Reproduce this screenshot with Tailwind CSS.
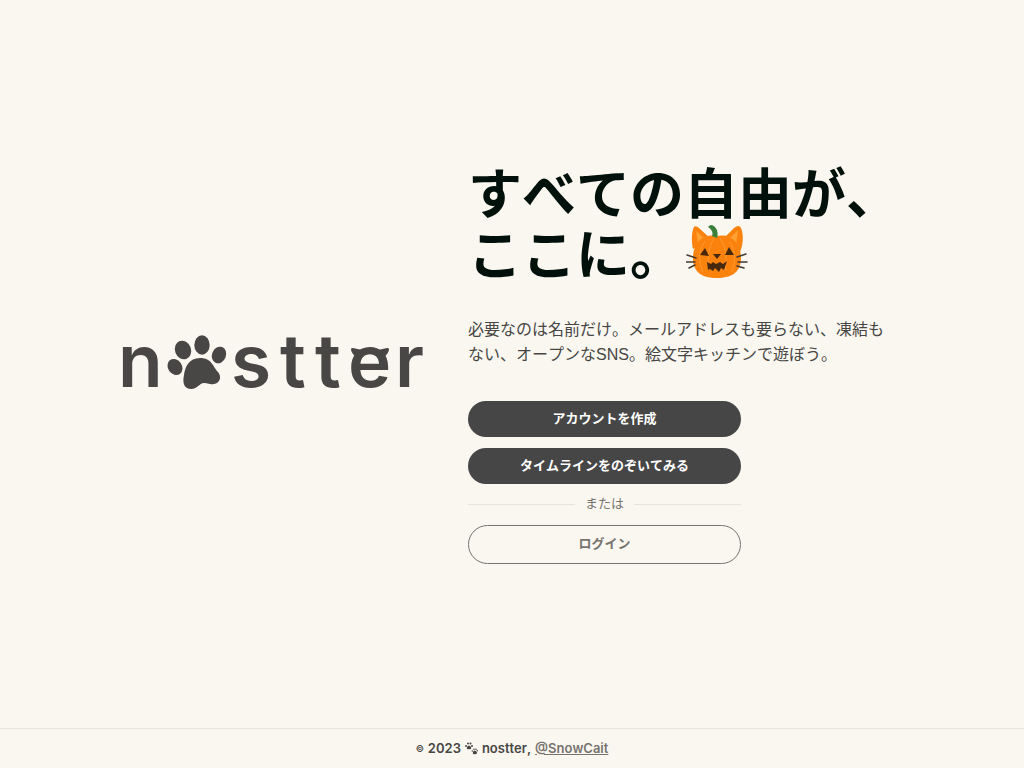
<!DOCTYPE html>
<html lang="ja">
<head>
<meta charset="utf-8">
<meta name="viewport" content="width=device-width, initial-scale=1">
<title>nostter</title>
<script src="https://cdn.jsdelivr.net/npm/@tailwindcss/browser@4"></script>
</head>
<body class="flex min-h-screen flex-col bg-[#faf7f1] font-['Liberation_Sans','Noto_Sans_CJK_JP',sans-serif] text-[#474644] [font-kerning:none]">
<main class="flex flex-1 flex-wrap items-center justify-center gap-[42px] pb-1">
  <svg class="w-[309px]" viewBox="-5 -22 309 100" fill="#484745" role="img" aria-label="nostter">
    <g font-family="Inter, sans-serif" font-size="73" font-weight="600">
      <text y="53" x="-4">n</text>
      <text y="53" x="109">s</text>
      <text y="53" x="158">t</text>
      <text y="53" x="193">t</text>
      <text y="53" x="226">e</text>
      <text y="53" x="273">r</text>
    </g>
    <path d="M229 15q0-1 2-1l9 2-6 7q-5-4-5-8ZM267 15q0-1-2-1l-9 2 6 7q5-4 5-8Z"/>
    <ellipse cx="53" cy="33" rx="7" ry="8.500" transform="rotate(-35 53 33)"/>
    <ellipse cx="61" cy="16" rx="8" ry="9.500" transform="rotate(-20 61 16)"/>
    <ellipse cx="80" cy="11" rx="7.700" ry="9.700"/>
    <ellipse cx="97" cy="21" rx="7" ry="8.500" transform="rotate(22 97 21)"/>
    <path d="M78 24C67 24 63 33 62 41C60 50 63 55 69 55C76 55 77 49 82 49C87 49 88 51 92 50C98 49 100 43 96 38C91 33 90 24 78 24Z"/>
  </svg>
  <section class="w-[439px] max-w-full">
    <h1 class="pt-1 text-[54px] leading-[61px] font-bold whitespace-nowrap text-[#00100b]">すべての自由が、<br>ここに。<svg class="-mt-[22px] -mb-[10px] ml-[2px] inline-block h-[60px] w-[62px] align-middle" viewBox="0 0 62 60" role="img" aria-label="かぼちゃの猫">
        <path d="M7 25C5 16 6 6 8 3Q10 1 13 4L25 15ZM37 15L48 4Q53 0 55 4C58 11 57 22 54 28Z" fill="#fb830d"/>
        <path d="M10 7L12 19 20 16ZM52 6L50 21 42 16Z" fill="#ffa033"/>
        <path d="M31 12C18 9 7 18 7 34C7 49 17 54 31 54C46 54 55 48 55 34C55 18 44 9 31 12Z" fill="#fb830d"/>
        <path d="M19 17Q9 30 17 48M28 14Q20 27 23 46M34 14Q43 28 39 46M44 18Q52 31 46 48" fill="none" stroke="#ff9830" stroke-width="1"/>
        <path d="M22 3Q25-1 29 3Q33 7 31 14L26 12Q28 7 22 3Z" fill="#39813a"/>
        <path d="M19 24L23 32 14 31ZM43 23L48 31 39 31ZM27 30L35 30 31 35ZM21 38L25 40 27 38 30 40 34 38 37 40 41 37 38 46 35 44 33 48 29 44 27 47 24 45 22 46Z" fill="#49290e"/>
        <path d="M1 31L10 34M0 38H9M3 44L9 41M51 33L60 30M52 38L61 38M51 42L58 44" fill="none" stroke="#433a31" stroke-width="1.500" stroke-linecap="round"/>
      </svg></h1>
    <p class="mt-[30px] max-w-[424px] text-[16px] leading-[25px]">必要なのは名前だけ。メールアドレスも要らない、凍結もない、オープンなSNS。絵文字キッチンで遊ぼう。</p>
    <div class="mt-[34px] flex w-[273px] flex-col text-[13px]">
      <button type="button" class="h-9 rounded-full bg-[#464646] font-bold text-white">アカウントを作成</button>
      <button type="button" class="mt-[11px] h-9 rounded-full bg-[#464646] font-bold text-white">タイムラインをのぞいてみる</button>
      <div class="flex h-[41px] items-center gap-[10px] text-[#77736e]">
        <span class="h-px flex-1 bg-[#e7e4de]"></span>または<span class="h-px flex-1 bg-[#e7e4de]"></span>
      </div>
      <button type="button" class="h-[39px] rounded-full border border-[#77736e] font-bold text-[#77736e]">ログイン</button>
    </div>
  </section>
</main>
<footer class="flex h-10 items-center justify-center gap-1 border-t border-[#e7e4de] font-['Inter',sans-serif] text-[13px] font-semibold">
  <span class="text-[9px]">©</span>
  <span>2023</span>
  <svg class="h-[13px] w-[13px]" viewBox="0 0 13 13" fill="#474644" aria-hidden="true">
    <path d="M2 5Q4 2 6 5Q7 8 4 7Q1 8 2 5Z"/><circle cx="1" cy="4" r="1"/><circle cx="3" cy="1.500" r="1"/><circle cx="5.500" cy="1.500" r="1"/><circle cx="7" cy="4" r="1"/>
    <path d="M8 10Q9 7 12 10Q12 13 10 12Q7 13 8 10Z"/><circle cx="7.300" cy="9" r=".8"/><circle cx="9" cy="7.300" r=".8"/><circle cx="11" cy="7.300" r=".8"/><circle cx="12.300" cy="8.800" r=".7"/>
  </svg>
  <span>nostter,</span>
  <a href="#" class="text-[#77736e] underline">@SnowCait</a>
</footer>
</body>
</html>
